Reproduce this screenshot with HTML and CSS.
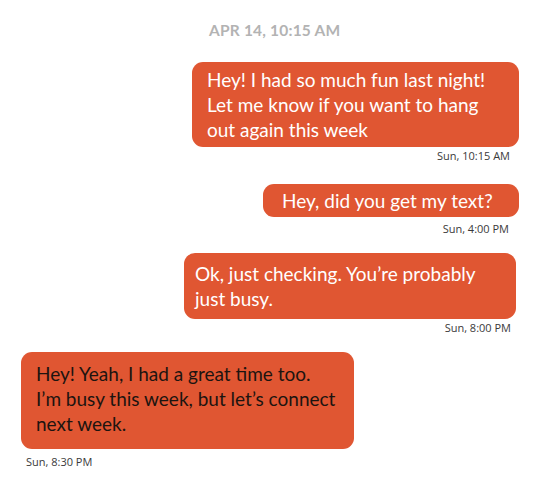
FILE: index.html
```html
<!DOCTYPE html>
<html>
<head>
    <meta charset="utf-8">
    <link rel="stylesheet" href="styles.css">
</head>
<body>
    <div class="thread">
        <div class="date-header">APR 14, 10:15 AM</div>

        <div class="msg msg-out msg-first">
            <div class="bubble bubble-one">Hey! I had so much fun last night! Let me know if you want to hang out again this week</div>
            <div class="stamp stamp-one">Sun, 10:15 AM</div>
        </div>

        <div class="msg msg-out msg-second">
            <div class="bubble bubble-two">Hey, did you get my text?</div>
            <div class="stamp stamp-two">Sun, 4:00 PM</div>
        </div>

        <div class="msg msg-out">
            <div class="bubble bubble-three">Ok, just checking. You’re probably just busy.</div>
            <div class="stamp stamp-three">Sun, 8:00 PM</div>
        </div>

        <div class="msg msg-in">
            <div class="bubble bubble-four">Hey! Yeah, I had a great time too.<br>I’m busy this week, but let’s connect next week.</div>
            <div class="stamp stamp-four">Sun, 8:30 PM</div>
        </div>
    </div>
</body>
</html>
```

FILE: styles.css
```css
body {
    margin: 0;
    background: #ffffff;
    font-family: 'Lato', 'Open Sans', sans-serif;
}

.thread {
    width: 552px;
    height: 490px;
    padding-top: 21px;
    box-sizing: border-box;
    display: flex;
    flex-direction: column;
}

.date-header {
    margin-left: 209px;
    font-size: 15.5px;
    line-height: 18px;
    font-weight: 700;
    color: #b3b3b3;
    letter-spacing: 0.2px;
}

.msg {
    display: flex;
    flex-direction: column;
    margin-top: 18px;
}

.msg-first {
    margin-top: 23px;
}

.msg-second {
    margin-top: 22px;
}

.msg-out {
    align-items: flex-end;
}

.msg-in {
    align-items: flex-start;
    margin-left: 21px;
}

.bubble {
    background: #e05632;
    color: #ffffff;
    border-radius: 11px;
    font-size: 19px;
    line-height: 25px;
    box-sizing: border-box;
}

.bubble-one {
    width: 327px;
    margin-right: 33px;
    padding: 5px 12px 5px 15px;
}

.bubble-two {
    width: 256px;
    margin-right: 33px;
    padding: 4px 10px 4px 19px;
}

.bubble-three {
    width: 332px;
    margin-right: 36px;
    padding: 8px 10px 8px 11px;
}

.bubble-four {
    width: 333px;
    padding: 9px 8px 13px 15px;
    color: #1c1410;
}

.stamp {
    font-family: 'Open Sans', sans-serif;
    font-size: 11px;
    line-height: 12px;
    color: #3a3a3a;
}

.stamp-one {
    margin-top: 3px;
    margin-right: 42px;
}

.stamp-two {
    margin-top: 6px;
    margin-right: 43px;
}

.stamp-three {
    margin-top: 3px;
    margin-right: 41px;
}

.stamp-four {
    margin-top: 7px;
    margin-left: 5px;
}
```
